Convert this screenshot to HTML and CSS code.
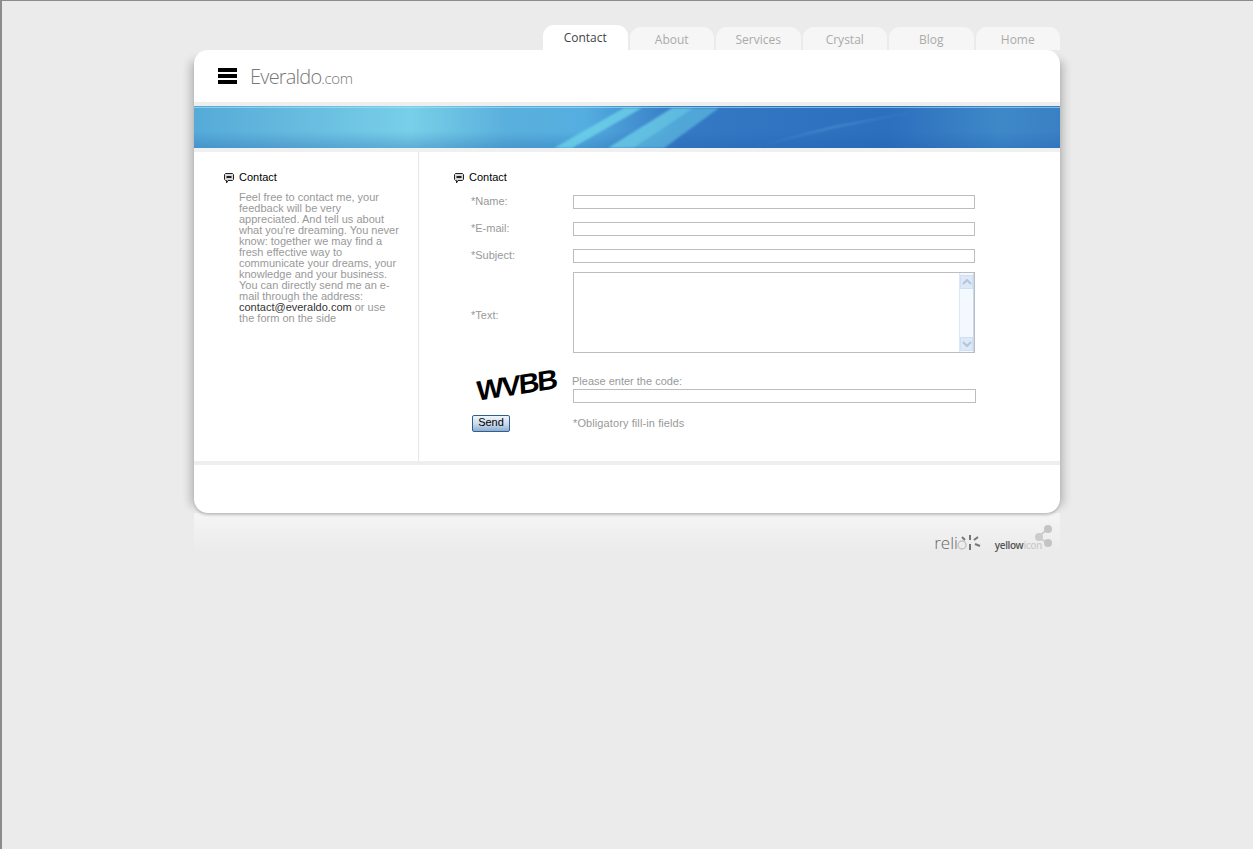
FILE: index.html
```html
<!DOCTYPE html>
<html lang="en">
<head>
    <meta charset="UTF-8">
    <title>Everaldo.com - Contact</title>
    <link rel="stylesheet" href="styles.css">
</head>
<body>
    <div class="page">
        <nav class="tabs">
            <a class="tab tab-active">Contact</a>
            <a class="tab">About</a>
            <a class="tab">Services</a>
            <a class="tab">Crystal</a>
            <a class="tab">Blog</a>
            <a class="tab">Home</a>
        </nav>
        <div class="card">
            <header class="top">
                <div class="bars"><span></span><span></span><span></span></div>
                <div class="logo">Everaldo<small>.com</small></div>
            </header>
            <div class="banner">
                <svg width="866" height="42" viewBox="0 0 866 42">
                    <defs>
                        <linearGradient id="sky" x1="0" y1="0" x2="1" y2="0">
                            <stop offset="0" stop-color="#55aad8"/>
                            <stop offset="0.1" stop-color="#64b8de"/>
                            <stop offset="0.25" stop-color="#78cfe8"/>
                            <stop offset="0.36" stop-color="#5ab0dc"/>
                            <stop offset="0.45" stop-color="#55aee0"/>
                            <stop offset="0.56" stop-color="#3579c4"/>
                            <stop offset="0.8" stop-color="#2c6fbd"/>
                            <stop offset="0.93" stop-color="#3e88c8"/>
                            <stop offset="1" stop-color="#3a80c4"/>
                        </linearGradient>
                        <linearGradient id="shade" x1="0" y1="0" x2="0" y2="1">
                            <stop offset="0" stop-color="#ffffff" stop-opacity="0"/>
                            <stop offset="0.6" stop-color="#1a5aa8" stop-opacity="0"/>
                            <stop offset="1" stop-color="#1a5aa8" stop-opacity="0.28"/>
                        </linearGradient>
                        <filter id="soft"><feGaussianBlur stdDeviation="1.2"/></filter>
                    </defs>
                    <rect width="866" height="42" fill="url(#sky)"/>
                    <rect width="866" height="42" fill="url(#shade)"/>
                    <g filter="url(#soft)">
                        <polygon points="360,42 378,42 448,2 430,2" fill="#6fd6ea" opacity="0.75"/>
                        <polygon points="414,42 440,42 500,2 478,2" fill="#6fd6ea" opacity="0.7"/>
                        <polygon points="440,42 470,42 525,2 500,2" fill="#62c4e4" opacity="0.6"/>
                        <polygon points="556,42 640,22 720,6 640,20" fill="#5fa0e0" opacity="0.5"/>
                    </g>
                    <rect width="866" height="1" y="1" fill="#a8e4f2" opacity="0.6"/>
                </svg>
            </div>
            <div class="content">
                <aside class="side">
                    <h2 class="title">
                        <svg class="bubble" width="10" height="11" viewBox="0 0 10 11"><path d="M1.5 .5h7l1 1v5l-1 1H4l-1.5 2.5V7.500H1.500l-1-1v-5z" fill="#d8d8d8" stroke="#222"/><path d="M2.500 3h5v2h-5z" fill="#222"/></svg>
                        Contact
                    </h2>
                    <p class="intro">Feel free to contact me, your feedback will be very appreciated. And tell us about what you're dreaming. You never know: together we may find a fresh effective way to communicate your dreams, your knowledge and your business. You can directly send me an e-mail through the address: <a class="mail">contact@everaldo.com</a> or use the form on the side</p>
                </aside>
                <main class="main">
                    <h2 class="title">
                        <svg class="bubble" width="10" height="11" viewBox="0 0 10 11"><path d="M1.5 .5h7l1 1v5l-1 1H4l-1.5 2.5V7.500H1.500l-1-1v-5z" fill="#d8d8d8" stroke="#222"/><path d="M2.500 3h5v2h-5z" fill="#222"/></svg>
                        Contact
                    </h2>
                    <form class="form">
                        <label class="lbl">*Name:</label>
                        <input class="field" type="text">
                        <label class="lbl">*E-mail:</label>
                        <input class="field" type="text">
                        <label class="lbl">*Subject:</label>
                        <input class="field" type="text">
                        <label class="lbl lbl-text">*Text:</label>
                        <div class="textbox">
                            <textarea class="area"></textarea>
                            <div class="scroll">
                                <span class="arrow"><svg width="10" height="6" viewBox="0 0 10 6"><path d="M1 5l4-4 4 4" fill="none" stroke="#b4c4da" stroke-width="2"/></svg></span>
                                <span class="arrow"><svg width="10" height="6" viewBox="0 0 10 6"><path d="M1 1l4 4 4-4" fill="none" stroke="#b4c4da" stroke-width="2"/></svg></span>
                            </div>
                        </div>
                        <div class="captcha"><span>WVBB</span></div>
                        <div class="code">
                            <label class="lbl">Please enter the code:</label>
                            <input class="field" type="text">
                        </div>
                        <button class="send" type="button">Send</button>
                        <div class="lbl note">*Obligatory fill-in fields</div>
                    </form>
                </main>
            </div>
            <div class="bottom"></div>
        </div>
        <div class="under">
            <div class="relio">reli<svg width="24" height="18" viewBox="0 0 24 18"><circle cx="5" cy="11" r="4" fill="none" stroke="#c4c4c4" stroke-width="1.500"/><g stroke="#777" stroke-width="2"><path d="M13 1v5"/><path d="M5 3l3 3"/><path d="M21 3l-4 3"/><path d="M23 12l-5-2"/><path d="M13 10v6"/></g></svg></div>
            <div class="yellow">yellow<b>icon</b><svg class="nodes" width="18" height="24" viewBox="0 0 18 24"><path d="M3 12L13 4M3 12l11 7" stroke="#ccc" stroke-width="2"/><circle cx="4" cy="12" r="4" fill="#ccc"/><circle cx="13" cy="4" r="4" fill="#c4c4c4"/><circle cx="13" cy="18" r="4" fill="#c4c4c4"/></svg></div>
        </div>
    </div>
</body>
</html>
```

FILE: styles.css
```css
html, body {
    margin: 0;
    height: 100%;
}
body {
    background-color: #ebebeb;
    font-family: "Liberation Sans", Arial, sans-serif;
    font-size: 11px;
    color: #999999;
    border-top: 1px solid #8c8c8c;
    border-left: 2px solid #8c8c8c;
    box-sizing: border-box;
    overflow: hidden;
}
.page {
    width: 866px;
    margin-left: 192px;
    padding-top: 24px;
}
.tabs {
    display: flex;
    align-items: flex-end;
    gap: 2px;
    height: 25px;
    padding-left: 349px;
}
.tab {
    flex: 1;
    height: 23px;
    background-color: #f6f6f6;
    border-radius: 11px 11px 0 0;
    color: #aaaaaa;
    font-family: "Open Sans", sans-serif;
    font-size: 12px;
    line-height: 26px;
    text-align: center;
}
.tab-active {
    height: 25px;
    background-color: #ffffff;
    color: #444444;
    line-height: 25px;
}
.card {
    background-color: #ffffff;
    border-radius: 14px;
    box-shadow: 0 3px 3px -1px rgba(0, 0, 0, 0.22), -12px 2px 8px -8px rgba(0, 0, 0, 0.2), 12px 2px 8px -8px rgba(0, 0, 0, 0.2);
    position: relative;
}
.top {
    display: flex;
    align-items: center;
    gap: 13px;
    height: 52px;
    padding-left: 24px;
    border-bottom: 4px solid #eeeeee;
}
.bars {
    display: flex;
    flex-direction: column;
    gap: 2px;
    width: 19px;
}
.bars span {
    height: 4px;
    background-color: #000000;
}
.logo {
    font-family: "Open Sans", sans-serif;
    font-weight: 300;
    font-size: 20px;
    letter-spacing: -0.8px;
    color: #777777;
}
.logo small {
    font-size: 15px;
    letter-spacing: -0.4px;
}
.banner {
    height: 42px;
}
.banner svg {
    display: block;
}
.content {
    display: flex;
    height: 309px;
    border-top: 4px solid #f0f0f0;
    border-bottom: 4px solid #eeeeee;
}
.side {
    width: 225px;
    padding: 18px 0 0 30px;
    box-sizing: border-box;
    border-right: 1px solid #e6e6e6;
}
.main {
    flex: 1;
    padding: 18px 0 0 35px;
}
.title {
    display: flex;
    align-items: center;
    gap: 5px;
    margin: 0;
    height: 13px;
    font-size: 11px;
    font-weight: normal;
    color: #000000;
}
.bubble {
    margin-top: 4px;
}
.intro {
    width: 164px;
    margin: 9px 0 0 15px;
    line-height: 11px;
}
.mail {
    color: #333333;
}
.form {
    display: grid;
    grid-template-columns: 102px 402px;
    grid-auto-rows: min-content;
    row-gap: 13px;
    padding: 12px 0 0 17px;
    align-items: center;
}
.lbl {
    display: block;
}
.field {
    display: block;
    width: 100%;
    height: 14px;
    box-sizing: border-box;
    margin: 0;
    padding: 0 2px;
    background-color: #ffffff;
    border: 1px solid #bdbdbd;
    outline: none;
}
.form > .lbl {
    line-height: 14px;
    margin-top: -3px;
}
.form > .lbl-text {
    margin-top: 0;
}
.textbox {
    display: flex;
    height: 81px;
    margin-top: -4px;
    box-sizing: border-box;
    border: 1px solid #bdbdbd;
}
.area {
    flex: 1;
    min-width: 0;
    margin: 0;
    padding: 2px;
    border: 0;
    outline: none;
    resize: none;
    overflow: hidden;
}
.scroll {
    display: flex;
    flex-direction: column;
    justify-content: space-between;
    width: 15px;
    padding: 2px 1px 1px;
    box-sizing: border-box;
    background-color: #f4f8ff;
    border-left: 1px solid #dce8f8;
    border-right: 1px solid #c8d8f0;
}
.arrow {
    display: flex;
    align-items: center;
    justify-content: center;
    height: 14px;
    background-color: #dde8f8;
    border: 1px solid #cfdff4;
    box-sizing: border-box;
    margin: 0 -1px;
}
.captcha {
    display: flex;
    justify-content: center;
    align-items: center;
    width: 90px;
    height: 40px;
    margin-top: -1px;
}
.captcha span {
    font-size: 29px;
    font-weight: bold;
    color: #000000;
    letter-spacing: -2px;
    transform: rotate(-9deg) skewX(-6deg) scaleY(0.95);
}
.code {
    display: flex;
    flex-direction: column;
    gap: 2px;
    padding-top: 6px;
    margin-left: -1px;
}
.code .field {
    margin-left: 1px;
}
.code .lbl {
    line-height: 12px;
}
.send {
    width: 38px;
    height: 17px;
    margin: 0 0 0 1px;
    padding: 0 0 3px;
    font-family: "Liberation Sans", Arial, sans-serif;
    font-size: 11px;
    color: #000000;
    line-height: 12px;
    background: linear-gradient(#f0f5fb, #c8d8ec 55%, #8faed0);
    border: 1px solid #2f5f90;
    border-radius: 2px;
    margin-top: -3px;
}
.form > .note {
    margin-top: -5px;
    letter-spacing: 0.1px;
}
.bottom {
    height: 48px;
}
.under {
    display: flex;
    justify-content: flex-end;
    align-items: flex-end;
    gap: 14px;
    height: 32px;
    padding: 7px 7px 0 0;
    background: linear-gradient(#f5f5f5, #ebebeb);
}
.relio {
    display: flex;
    align-items: flex-end;
    font-family: "Open Sans", sans-serif;
    font-weight: 300;
    font-size: 17px;
    line-height: 18px;
    color: #666666;
}
.relio svg {
    margin-left: -1px;
}
.yellow {
    display: flex;
    align-items: flex-end;
    font-family: "Open Sans", sans-serif;
    font-size: 10px;
    font-weight: 600;
    letter-spacing: -0.4px;
    line-height: 13px;
    color: #555555;
}
.yellow b {
    font-weight: 600;
    color: #cccccc;
}
.nodes {
    margin-left: -7px;
    margin-bottom: 3px;
}
```
